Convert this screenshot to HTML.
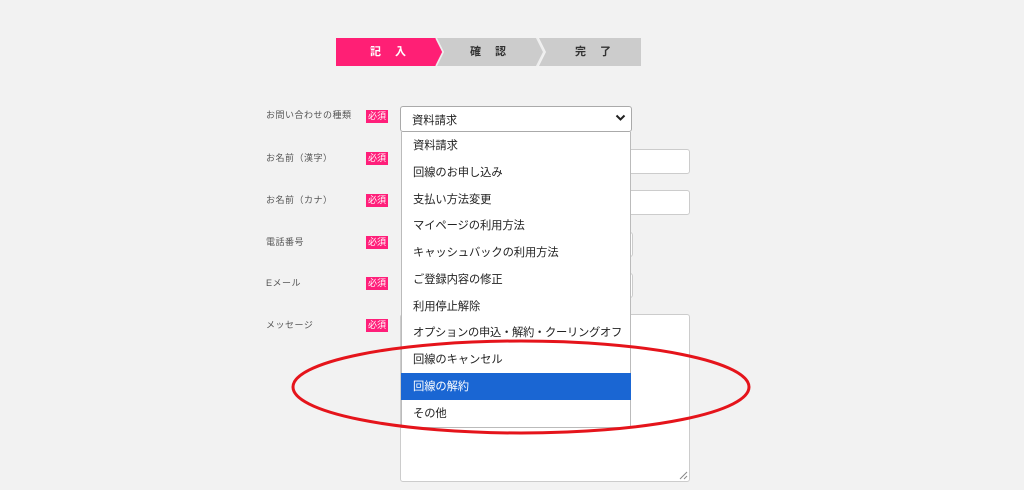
<!DOCTYPE html>
<html><head><meta charset="utf-8"><style>
*{margin:0;padding:0;box-sizing:border-box}
body{width:1024px;height:490px;background:#f2f2f2;position:relative;overflow:hidden;font-family:"Liberation Sans","Noto Sans CJK JP",sans-serif}
.a{position:absolute}
.lbl{position:absolute;left:266px;font-size:9px;color:#555;letter-spacing:0.5px}
.bd{position:absolute;left:366px;width:22px;height:13px;background:#ff1f7a;color:#fff;font-size:9px;line-height:13px;text-align:center}
.in{position:absolute;background:#fff;border:1px solid #ccc;border-radius:3px}
.it{position:absolute;left:401px;width:230px;height:26.7px;line-height:28px;padding-left:12px;font-size:11.3px;color:#222;white-space:nowrap;overflow:hidden;letter-spacing:-0.1px}
.st{position:absolute;top:38px;height:28px;line-height:28px;font-size:11px;font-weight:bold;letter-spacing:14px;text-align:center}
</style></head><body>
<svg class="a" style="left:336px;top:38px" width="305" height="29">
<polygon points="0,0 100,0 107,14 100,28 0,28" fill="#ff1f75"/>
<polygon points="101,0 200,0 207,14 200,28 101,28 108,14" fill="#cccccc"/>
<polygon points="203,0 305,0 305,28 203,28 210,14" fill="#cccccc"/>
<polyline points="100,0 107,14 100,28" fill="none" stroke="#eee" stroke-width="1.5"/>
<polyline points="201,0 208,14 201,28" fill="none" stroke="#eee" stroke-width="1.5"/>
</svg>
<div class="st" style="left:350px;width:90px;color:#fff">記入</div>
<div class="st" style="left:455px;width:80px;color:#333">確認</div>
<div class="st" style="left:560px;width:80px;color:#333">完了</div>

<div class="lbl" style="top:108px">お問い合わせの種類</div>
<div class="lbl" style="top:151px">お名前（漢字）</div>
<div class="lbl" style="top:193px">お名前（カナ）</div>
<div class="lbl" style="top:235px">電話番号</div>
<div class="lbl" style="top:276px">Eメール</div>
<div class="lbl" style="top:318px">メッセージ</div>
<div class="bd" style="top:110px">必須</div>
<div class="bd" style="top:152px">必須</div>
<div class="bd" style="top:194px">必須</div>
<div class="bd" style="top:236px">必須</div>
<div class="bd" style="top:277px">必須</div>
<div class="bd" style="top:319px">必須</div>

<div class="in" style="left:600px;top:149px;width:90px;height:25px"></div>
<div class="in" style="left:600px;top:190px;width:90px;height:25px"></div>
<div class="in" style="left:600px;top:232px;width:33px;height:25px"></div>
<div class="in" style="left:600px;top:273px;width:33px;height:25px"></div>
<div class="in" style="left:400px;top:314px;width:290px;height:168px"></div>
<svg class="a" style="left:679px;top:471px" width="9" height="9"><path d="M1 8L8 1M5 8L8 5" stroke="#888" stroke-width="1"/></svg>

<div class="in" style="left:400px;top:106px;width:232px;height:26px;border-color:#aaa"></div>
<div class="a" style="left:412px;top:112px;font-size:11.3px;color:#222">資料請求</div>
<svg class="a" style="left:615px;top:114px" width="11" height="8"><path d="M1.5 1.5L5.5 5.5L9.5 1.5" fill="none" stroke="#222" stroke-width="2"/></svg>

<div class="a" style="left:401px;top:132px;width:230px;height:296px;background:#fff;border:1px solid #bbb;border-top:none"></div>
<div class="it" style="top:132px">資料請求</div>
<div class="it" style="top:159px">回線のお申し込み</div>
<div class="it" style="top:186px">支払い方法変更</div>
<div class="it" style="top:212px">マイページの利用方法</div>
<div class="it" style="top:239px">キャッシュバックの利用方法</div>
<div class="it" style="top:266px">ご登録内容の修正</div>
<div class="it" style="top:293px">利用停止解除</div>
<div class="it" style="top:319px;letter-spacing:-0.3px">オプションの申込・解約・クーリングオフ</div>
<div class="it" style="top:346px">回線のキャンセル</div>
<div class="it" style="top:373px;background:#1a66d3;color:#fff">回線の解約</div>
<div class="it" style="top:400px">その他</div>

<svg class="a" style="left:0;top:0" width="1024" height="490"><ellipse cx="521" cy="387" rx="228" ry="46" fill="none" stroke="#e5141b" stroke-width="3"/></svg>
</body></html>
